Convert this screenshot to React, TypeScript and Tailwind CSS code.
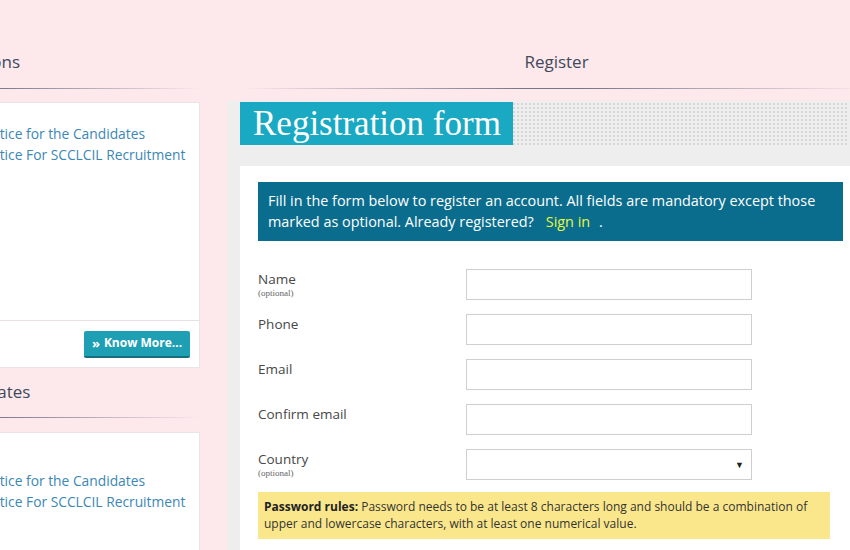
import React from "react";

const font = { fontFamily: "'Open Sans', 'Noto Sans', sans-serif" };

function Heading({
  children,
  h,
  pb,
}: {
  children: React.ReactNode;
  h: string;
  pb: string;
}) {
  return (
    <div className="flex flex-col items-center">
      <div className={`${h} ${pb} flex items-end text-[17px] leading-[24px] text-[#3f4a5a] whitespace-nowrap`}>
        {children}
      </div>
      <div className="h-[1px] w-full bg-[linear-gradient(90deg,transparent,#77778a_45%,#77778a_55%,transparent)]" />
    </div>
  );
}

function LeftCard({ withButton, pt, h }: { withButton?: boolean; pt: string; h: string }) {
  return (
    <div className="bg-white border border-[#ece3e6]">
      <div className={`pl-[240px] ${pt} ${h} flex flex-col text-[13.8px] leading-[21px] text-[#3b87b6] whitespace-nowrap`}>
        <span>Notice for the Candidates</span>
        <span>Notice For SCCLCIL Recruitment</span>
      </div>
      {withButton && (
        <div className="border-t border-[#eadfe2] h-[47px] flex items-center justify-end pr-[9px]">
          <button className="h-[27px] w-[106px] rounded-[2px] bg-[#1f9fb4] border-b-2 border-[#156f80] text-white text-[12px] font-bold flex items-center justify-center gap-[4px]">
            <span className="text-[13px] leading-none">»</span>
            <span>Know More...</span>
          </button>
        </div>
      )}
    </div>
  );
}

function Field({
  label,
  optional,
  select,
}: {
  label: string;
  optional?: boolean;
  select?: boolean;
}) {
  return (
    <div className="flex h-[45px]">
      <div className="w-[208px] pt-[1px] flex flex-col">
        <span className="text-[13.5px] leading-[18px] text-[#474747]">{label}</span>
        {optional && (
          <span className="text-[9px] leading-[10px] text-[#666]" style={{ fontFamily: "'Liberation Serif', serif" }}>
            (optional)
          </span>
        )}
      </div>
      <div className="w-[286px] h-[31px] border border-[#cfcfcf] bg-white flex items-center justify-end pr-[7px]">
        {select && <span className="text-[9px] text-[#222]">▼</span>}
      </div>
    </div>
  );
}

export default function App() {
  return (
    <div className="w-[850px] h-[550px] overflow-hidden bg-[#fde8ec]" style={font}>
      <div className="flex ml-[-260px]">
        {/* Left column */}
        <div className="w-[460px] shrink-0 flex flex-col">
          <Heading h="h-[88px]" pb="pb-[14px]">
            <span>Notifications</span>
          </Heading>
          <div className="mt-[13px]">
            <LeftCard withButton pt="pt-[20px]" h="h-[217px]" />
          </div>
          <Heading h="h-[49px]" pb="pb-[13px]">
            <span className="pl-[2px]">Latest Updates</span>
          </Heading>
          <div className="mt-[14px]">
            <LeftCard pt="pt-[37px]" h="h-[200px]" />
          </div>
        </div>
        {/* Right column */}
        <div className="ml-[27px] w-[650px] shrink-0 flex flex-col">
          <div className="pl-[13px] pr-[10px]">
            <Heading h="h-[88px]" pb="pb-[14px]">
              <span className="pl-[6px]">Register</span>
            </Heading>
          </div>
          <div className="mt-[12px] bg-[#eeeeee] pl-[13px] pt-[1px] h-[500px]">
            <div className="h-[44px] flex bg-[#eeeeee] bg-[radial-gradient(#d6d6d6_0.8px,transparent_1px)] bg-size-[4px_4px] w-[608px]">
              <div
                className="w-[273px] h-[43px] bg-[#19a9c3] text-white text-[35px] leading-[43px] pl-[13px] whitespace-nowrap"
                style={{ fontFamily: "'Liberation Serif', serif" }}
              >
                Registration form
              </div>
            </div>
            <div className="mt-[20px] bg-white w-[610px] h-[400px] pl-[18px] pt-[16px]">
              <div className="w-[585px] h-[59px] bg-[#0b6d8e] px-[10px] pt-[8px] text-white text-[14.4px] leading-[21px]">
                Fill in the form below to register an account. All fields are mandatory except those marked as optional. Already registered?
                <span className="text-[#e4f93a] ml-[12px]">Sign in</span>
                <span className="ml-[9px]">.</span>
              </div>
              <div className="mt-[28px] flex flex-col">
                <Field label="Name" optional />
                <Field label="Phone" />
                <Field label="Email" />
                <Field label="Confirm email" />
                <Field label="Country" optional select />
              </div>
              <div className="mt-[-2px] w-[572px] h-[47px] bg-[#fbe78b] px-[6px] pt-[6px] text-[12px] leading-[17px] text-[#333]">
                <span className="font-bold text-[#222]">Password rules:</span> Password needs to be at least 8 characters long and should be a combination of upper and lowercase characters, with at least one numerical value.
              </div>
            </div>
          </div>
        </div>
      </div>
    </div>
  );
}
